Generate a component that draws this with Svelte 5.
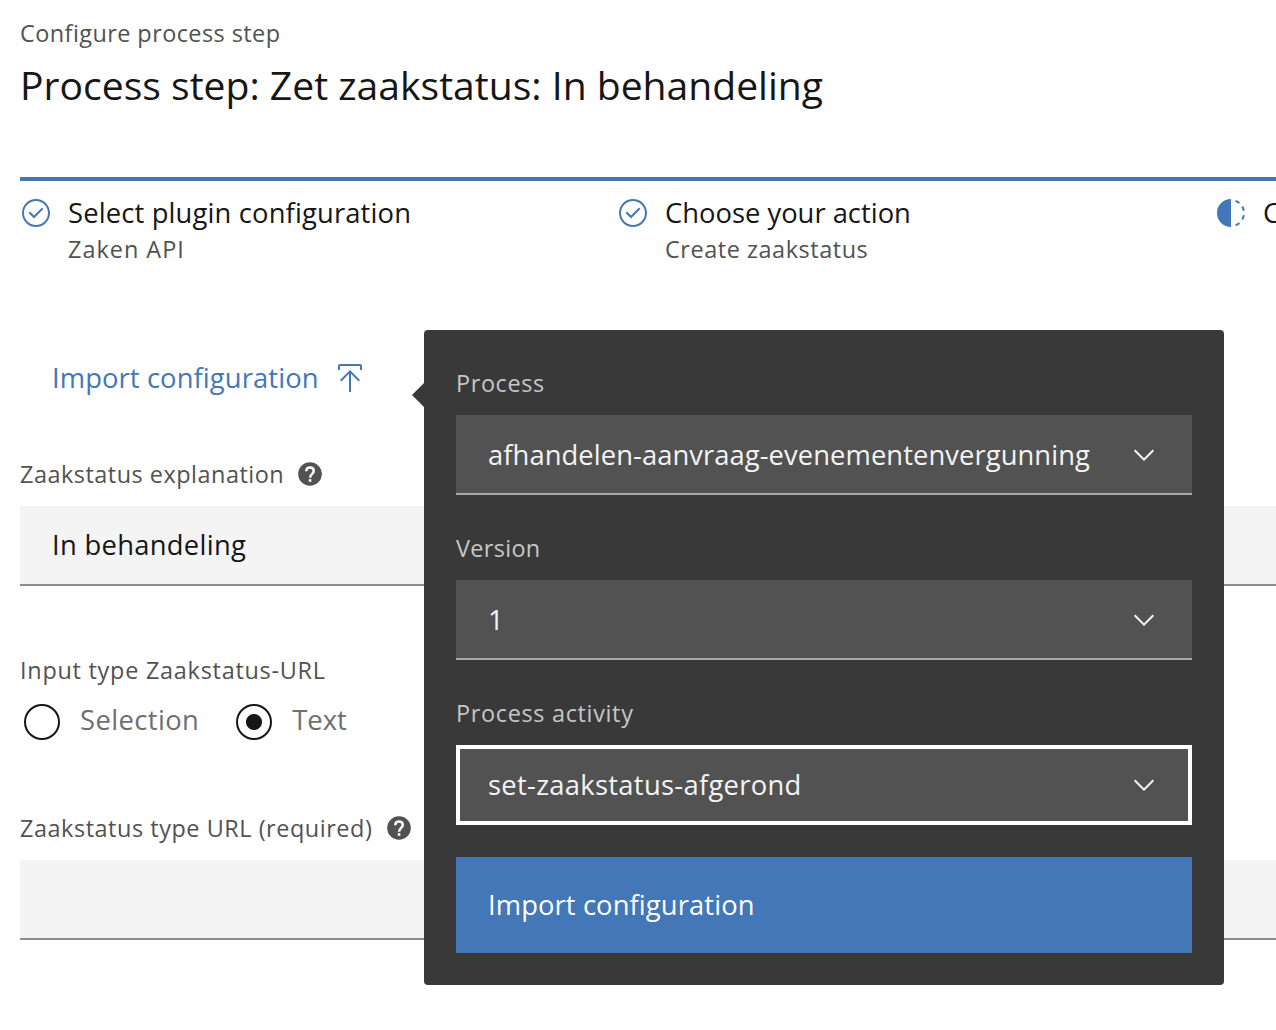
<script>
  let explanation = $state('In behandeling');
  let typeUrl = $state('');
  let inputType = $state('Text');

  const steps = [
    { label: 'Select plugin configuration', sub: 'Zaken API', done: true, tone: 'first' },
    { label: 'Choose your action', sub: 'Create zaakstatus', done: true, tone: 'second' },
    { label: 'Configure action', sub: '', done: false, tone: 'third' }
  ];

  const selects = [
    { label: 'Process', value: 'afhandelen-aanvraag-evenementenvergunning', key: 'process' },
    { label: 'Version', value: '1', key: 'version' },
    { label: 'Process activity', value: 'set-zaakstatus-afgerond', key: 'activity', focused: true }
  ];
</script>

{#snippet help()}
  <svg class="help" viewBox="0 0 24 24" aria-hidden="true">
    <circle cx="12" cy="12" r="11.8" />
    <path class="hook" d="M8.3 9.3C8.3 6.9 9.9 5.6 12.1 5.6s3.6 1.3 3.6 3.3c0 2.9-3.6 3-3.6 6.9" />
    <path class="dot" d="M10.8 17.2h2.6v2.6h-2.6z" />
  </svg>
{/snippet}

<main>
  <p class="small overline">Configure process step</p>
  <h1>Process step: Zet zaakstatus: In behandeling</h1>

  <ol class="steps">
    {#each steps as step}
      <li class={step.tone}>
        {#if step.done}
          <svg class="icon" viewBox="0 0 16 16" aria-hidden="true">
            <path d="M7 10.7 4.3 8 5 7.3l2 2L11 5.3l.7.7z" />
            <path d="M8 1C4.1 1 1 4.1 1 8s3.1 7 7 7 7-3.1 7-7-3.1-7-7-7zm0 13c-3.3 0-6-2.7-6-6s2.7-6 6-6 6 2.7 6 6-2.7 6-6 6z" />
          </svg>
        {:else}
          <svg class="icon" viewBox="0 0 32 32" aria-hidden="true">
            <path d="M23.7642 6.8593l1.2851-1.5315A13.976 13.976 0 0020.8672 2.887l-.6836 1.8776A11.9729 11.9729 0 0123.7642 6.8593zM27.81 14l1.9677-.4128A13.8888 13.8888 0 0028.14 9.0457L26.4087 10A12.52 12.52 0 0127.81 14zM20.1836 27.2354l.6836 1.8776a13.976 13.976 0 004.1821-2.4408l-1.2851-1.5315A11.9729 11.9729 0 0120.1836 27.2354zM26.4087 22L28.14 23a14.14 14.14 0 001.6382-4.5872L27.81 18.0659A12.1519 12.1519 0 0126.4087 22zM16 30V2a14 14 0 000 28z" />
          </svg>
        {/if}
        <div>
          <p class="step-label">{step.label}</p>
          <p class="small sub">{step.sub}</p>
        </div>
      </li>
    {/each}
  </ol>

  <div class="import">
    <button class="import-link">
      <span>Import configuration</span>
      <svg class="icon" viewBox="0 0 32 32" aria-hidden="true">
        <path d="M6 18l1.41 1.41L15 11.83V30h2V11.83l7.59 7.58L26 18 16 8 6 18z" />
        <path d="M6 8V4h20v4h2V4a2 2 0 0 0-2-2H6a2 2 0 0 0-2 2v4z" />
      </svg>
    </button>

    <section class="popover">
      {#each selects as s}
        <div class="field">
          <p class="small {s.key}-label">{s.label}</p>
          <div class="select {s.key}" class:focused={s.focused}>
            <span>{s.value}</span>
            <svg class="icon" viewBox="0 0 16 16" aria-hidden="true">
              <path d="M8 11 3 6l.7-.7L8 9.6l4.3-4.3.7.7z" />
            </svg>
          </div>
        </div>
      {/each}
      <button class="submit">Import configuration</button>
    </section>
  </div>

  <label class="form-item">
    <span class="small caption explanation">Zaakstatus explanation {@render help()}</span>
    <input bind:value={explanation} />
  </label>

  <fieldset>
    <legend class="small">Input type Zaakstatus-URL</legend>
    <div class="radios">
      {#each ['Selection', 'Text'] as option}
        <label class="radio {option.toLowerCase()}">
          <input type="radio" name="input-type" value={option} bind:group={inputType} />
          <span>{option}</span>
        </label>
      {/each}
    </div>
  </fieldset>

  <label class="form-item">
    <span class="small caption type-url">Zaakstatus type URL (required) {@render help()}</span>
    <input bind:value={typeUrl} />
  </label>
</main>

<style>
  :global(body) {
    overflow: hidden;
    background: #fff;
  }

  main {
    --blue: #4377b8;
    box-sizing: border-box;
    width: 1276px;
    height: 1030px;
    padding: 17px 0 0 20px;
    overflow: hidden;
    color: #161616;
    font: 27.36px/36px 'Open Sans', sans-serif;
    font-variant-ligatures: none;
  }

  p,
  h1,
  ol,
  fieldset,
  legend {
    margin: 0;
    padding: 0;
    border: 0;
  }

  button,
  input {
    border: 0;
    border-radius: 0;
    font: inherit;
    letter-spacing: inherit;
    text-align: left;
  }

  svg {
    display: block;
    flex: none;
    fill: currentColor;
  }

  .icon {
    width: 32px;
    height: 32px;
  }

  .small {
    color: #525252;
    font-size: 23.45px;
    line-height: 32px;
    letter-spacing: 0.5px;
  }

  .overline {
    letter-spacing: 0.44px;
  }

  h1 {
    margin-top: 8px;
    font-size: 39.1px;
    font-weight: 400;
    line-height: 56px;
  }

  .steps {
    display: grid;
    grid-template-columns: 597px 598px 597px;
    height: 88px;
    margin-top: 64px;
    list-style: none;
  }

  .steps li {
    display: flex;
    gap: 16px;
    padding-top: 14px;
    border-top: 4px solid var(--blue);
    white-space: nowrap;
  }

  .steps .icon {
    margin-top: 2px;
    color: var(--blue);
  }

  .first .step-label {
    letter-spacing: 0.15px;
  }

  .sub {
    margin-top: 2px;
  }

  .first .sub {
    letter-spacing: 1px;
  }

  .second .sub {
    letter-spacing: 0.55px;
  }

  .import {
    position: relative;
    padding: 95px 0 0 32px;
  }

  .import-link {
    display: flex;
    gap: 15px;
    padding: 0;
    background: none;
    color: var(--blue);
    letter-spacing: 0.1px;
  }

  .import-link .icon {
    margin-top: 2px;
  }

  .popover {
    position: absolute;
    z-index: 1;
    top: 65px;
    left: 404px;
    box-sizing: border-box;
    width: 800px;
    height: 655px;
    padding: 37px 32px 32px;
    border-radius: 4px;
    background: #393939;
    color: #f4f4f4;
  }

  .popover::before {
    position: absolute;
    top: 53px;
    left: -12px;
    width: 12px;
    height: 24px;
    background: #393939;
    clip-path: polygon(100% 0, 0 50%, 100% 100%);
    content: '';
  }

  .popover .small {
    color: #c6c6c6;
  }

  .field {
    margin-bottom: 37px;
  }

  .field .process-label {
    letter-spacing: 0.6px;
  }

  .field .version-label {
    letter-spacing: 0.32px;
  }

  .field .activity-label {
    letter-spacing: 0.67px;
  }

  .select {
    display: flex;
    align-items: center;
    justify-content: space-between;
    box-sizing: border-box;
    height: 80px;
    margin-top: 16px;
    padding: 2px 32px 0;
    border-bottom: 2px solid #a8a8a8;
    background: #525252;
    letter-spacing: 0.07px;
  }

  .activity {
    letter-spacing: 0.3px;
  }

  .focused {
    padding: 0 28px;
    border: 4px solid #fff;
  }

  .submit {
    display: block;
    width: 100%;
    height: 96px;
    margin-top: -5px;
    padding: 0 32px;
    background: var(--blue);
    color: #fff;
    letter-spacing: 0.1px;
  }

  .form-item {
    display: block;
  }

  .import + .form-item {
    margin-top: 62px;
  }

  .caption {
    display: flex;
    align-items: center;
    gap: 14px;
  }

  .type-url {
    gap: 15px;
    letter-spacing: 0.54px;
  }

  .help {
    width: 24px;
    height: 24px;
    margin-top: -1px;
  }

  .hook {
    fill: none;
    stroke: #fff;
    stroke-width: 2.5;
  }

  .dot {
    fill: #fff;
  }

  .form-item input {
    display: block;
    box-sizing: border-box;
    width: 100%;
    height: 80px;
    margin-top: 16px;
    padding: 0 32px 2px;
    border-bottom: 2px solid #8d8d8d;
    background: #f4f4f4;
    color: #161616;
    letter-spacing: 0.3px;
    outline: 0;
  }

  fieldset {
    margin-top: 68px;
  }

  legend.small {
    letter-spacing: 0.74px;
  }

  .radios {
    display: flex;
    gap: 37px;
    margin: 16px 0 72px 4px;
  }

  .radio {
    display: flex;
    gap: 20px;
    color: #6f6f6f;
  }

  .radio.selection {
    letter-spacing: 0.4px;
  }

  .radio input {
    box-sizing: border-box;
    width: 36px;
    height: 36px;
    margin: 2px 0 0;
    border: 2px solid #161616;
    border-radius: 50%;
    appearance: none;
  }

  .radio input:checked {
    background: radial-gradient(circle, #161616 7.5px, transparent 8.5px);
  }
</style>
